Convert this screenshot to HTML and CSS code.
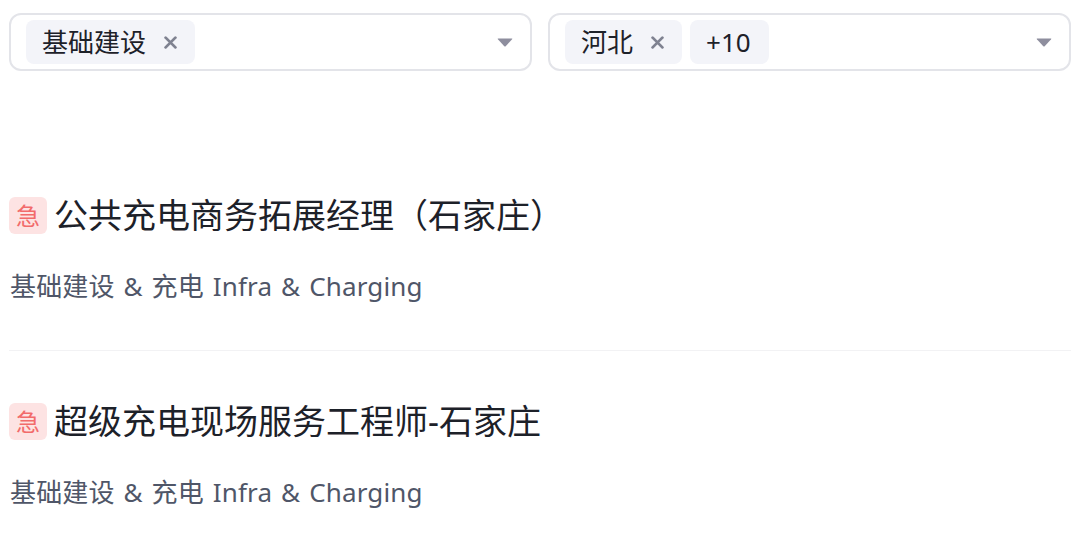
FILE: index.html
```html
<!DOCTYPE html>
<html lang="zh-CN">
<head>
<meta charset="utf-8">
<title>职位列表</title>
<link rel="stylesheet" href="styles.css">
</head>
<body>
<div class="page">
  <div class="filters">
    <div class="select">
      <div class="tags">
        <span class="tag">基础建设<svg class="close" viewBox="0 0 12 12"><path d="M1.5 1.5 L10.5 10.5 M10.5 1.5 L1.5 10.5"/></svg></span>
      </div>
      <svg class="arrow" viewBox="0 0 16 9"><path d="M1.2 0.5 H14.8 Q15.8 0.5 15.1 1.3 L8.7 8.2 Q8 8.9 7.3 8.2 L0.9 1.3 Q0.2 0.5 1.2 0.5 Z"/></svg>
    </div>
    <div class="select">
      <div class="tags">
        <span class="tag">河北<svg class="close" viewBox="0 0 12 12"><path d="M1.5 1.5 L10.5 10.5 M10.5 1.5 L1.5 10.5"/></svg></span>
        <span class="tag">+10</span>
      </div>
      <svg class="arrow" viewBox="0 0 16 9"><path d="M1.2 0.5 H14.8 Q15.8 0.5 15.1 1.3 L8.7 8.2 Q8 8.9 7.3 8.2 L0.9 1.3 Q0.2 0.5 1.2 0.5 Z"/></svg>
    </div>
  </div>
  <ul class="jobs">
    <li class="job">
      <div class="job-title"><span class="urgent">急</span><span class="name">公共充电商务拓展经理（石家庄）</span></div>
      <div class="job-cat">基础建设 &amp; 充电 Infra &amp; Charging</div>
    </li>
    <li class="job">
      <div class="job-title"><span class="urgent">急</span><span class="name">超级充电现场服务工程师-石家庄</span></div>
      <div class="job-cat">基础建设 &amp; 充电 Infra &amp; Charging</div>
    </li>
  </ul>
</div>
</body>
</html>
```

FILE: styles.css
```css
* { box-sizing: border-box; }
html, body {
  margin: 0;
  padding: 0;
  background: #ffffff;
  font-family: "Noto Sans", "Noto Sans CJK SC", sans-serif;
  color: #1d2129;
}
.page {
  padding: 13px 9px 0 9px;
}
.filters {
  display: flex;
  gap: 16px;
}
.select {
  flex: 1;
  height: 58px;
  border: 2px solid #e3e4e9;
  border-radius: 12px;
  display: flex;
  align-items: center;
  padding: 0 17px 0 15px;
}
.tags {
  flex: 1;
  display: flex;
  gap: 8px;
}
.tag {
  height: 44px;
  display: inline-flex;
  align-items: center;
  background: #f3f4f9;
  border-radius: 8px;
  padding: 0 18px 0 16px;
  font-size: 26px;
  line-height: 44px;
  color: #1d2129;
}
.close {
  width: 13px;
  height: 13px;
  margin-left: 18px;
  fill: none;
  stroke: #7f8291;
  stroke-width: 2.6;
  stroke-linecap: round;
}
.arrow {
  width: 16px;
  height: 9px;
  fill: #8e8e9e;
}
.jobs {
  list-style: none;
  margin: 74px 0 0 0;
  padding: 0;
}
.job {
  padding: 50px 0 46px 0;
  border-bottom: 1px solid #f2f2f4;
}
.job-title {
  display: flex;
  align-items: center;
  gap: 7px;
  height: 40px;
}
.urgent {
  width: 38px;
  height: 37px;
  border-radius: 6px;
  background: #fde3e3;
  color: #f26b6b;
  font-size: 24px;
  display: flex;
  align-items: center;
  justify-content: center;
  line-height: 1;
  font-family: "Noto Sans CJK SC", sans-serif;
}
.name {
  font-size: 34px;
  line-height: 40px;
  color: #1d2129;
  white-space: nowrap;
}
.job-cat {
  margin-top: 33px;
  padding-left: 1px;
  font-size: 26px;
  line-height: 36px;
  word-spacing: 2px;
  letter-spacing: 0.15px;
  color: #4f5668;
}
```
